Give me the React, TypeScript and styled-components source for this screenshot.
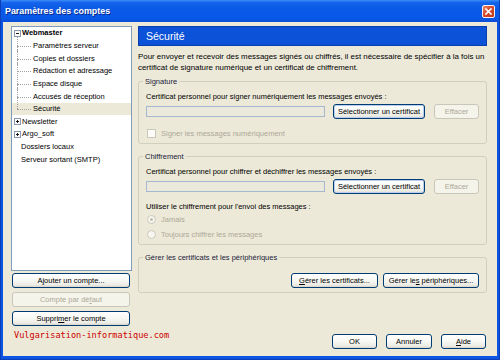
import React from 'react'
import styled, { createGlobalStyle } from 'styled-components'

const GlobalStyle = createGlobalStyle`
  html, body {
    margin: 0;
    padding: 0;
  }
  body {
    width: 500px;
    height: 360px;
    overflow: hidden;
    font-family: 'Liberation Sans', Arial, sans-serif;
    font-size: 7.5px;
    color: #000;
  }
`

type TreeItem = {
  label: string
  kind: 'root' | 'child' | 'leaf'
  sign?: 'plus' | 'minus'
  bold?: boolean
  selected?: boolean
  last?: boolean
}

const treeItems: TreeItem[] = [
  { label: 'Webmaster', kind: 'root', sign: 'minus', bold: true },
  { label: 'Paramètres serveur', kind: 'child' },
  { label: 'Copies et dossiers', kind: 'child' },
  { label: 'Rédaction et adressage', kind: 'child' },
  { label: 'Espace disque', kind: 'child' },
  { label: 'Accusés de réception', kind: 'child' },
  { label: 'Sécurité', kind: 'child', selected: true, last: true },
  { label: 'Newsletter', kind: 'root', sign: 'plus' },
  { label: 'Argo_soft', kind: 'root', sign: 'plus' },
  { label: 'Dossiers locaux', kind: 'leaf' },
  { label: 'Serveur sortant (SMTP)', kind: 'leaf' },
]

const ExpanderIcon: React.FC<{ sign: 'plus' | 'minus' }> = ({ sign }) => (
  <ExpanderSvg width='7' height='7' viewBox='0 0 7 7'>
    <rect x='0.5' y='0.5' width='6' height='6' fill='#fff' stroke='#8A97AC' />
    <line x1='2' y1='3.5' x2='5' y2='3.5' stroke='#1a1a1a' />
    {sign === 'plus' && <line x1='3.5' y1='2' x2='3.5' y2='5' stroke='#1a1a1a' />}
  </ExpanderSvg>
)

const CloseIcon = () => (
  <svg width='7' height='7' viewBox='0 0 7 7'>
    <path d='M1 1 L6 6 M6 1 L1 6' stroke='#fff' strokeWidth='1.6' strokeLinecap='square' />
  </svg>
)

const App: React.FC = () => {
  return (
    <>
      <GlobalStyle />
      <Window>
        <TitleBar>
          <Title>Paramètres des comptes</Title>
          <CloseButton>
            <CloseIcon />
          </CloseButton>
        </TitleBar>

        <Body>
          <Main>
            <LeftColumn>
              <TreeBox>
                {treeItems.map((item) => (
                  <TreeRow
                    key={item.label}
                    $kind={item.kind}
                    $selected={item.selected}
                    $last={item.last}
                  >
                    {item.sign && <ExpanderIcon sign={item.sign} />}
                    <TreeLabel $bold={item.bold}>{item.label}</TreeLabel>
                  </TreeRow>
                ))}
              </TreeBox>
              <SideButtons>
                <Button>
                  A<u>j</u>outer un compte...
                </Button>
                <Button disabled>
                  Compte par dé<u>f</u>aut
                </Button>
                <Button>
                  Suppri<u>m</u>er le compte
                </Button>
              </SideButtons>
              <Watermark>Vulgarisation-informatique.com</Watermark>
            </LeftColumn>

            <RightColumn>
              <PanelHeader>Sécurité</PanelHeader>
              <Intro>
                Pour envoyer et recevoir des messages signés ou chiffrés, il est
                nécessaire de spécifier à la fois un
                <br />
                certificat de signature numérique et un certificat de
                chiffrement.
              </Intro>

              <Group>
                <Caption>Signature</Caption>
                <Label>
                  Certificat personnel pour signer numériquement les messages
                  envoyés :
                </Label>
                <CertRow>
                  <CertField />
                  <Button $width={92} $focused>
                    Sélectionner un certificat
                  </Button>
                  <Button $width={45} disabled>
                    Effacer
                  </Button>
                </CertRow>
                <OptionRow $disabled $top={8}>
                  <CheckBox />
                  Signer les messages numériquement
                </OptionRow>
              </Group>

              <Group $gap>
                <Caption>Chiffrement</Caption>
                <Label>
                  Certificat personnel pour chiffrer et déchiffrer les messages
                  envoyés :
                </Label>
                <CertRow>
                  <CertField />
                  <Button $width={92} $focused>
                    Sélectionner un certificat
                  </Button>
                  <Button $width={45} disabled>
                    Effacer
                  </Button>
                </CertRow>
                <Label $top={6.5}>
                  Utiliser le chiffrement pour l'envoi des messages :
                </Label>
                <OptionRow $disabled $top={1.5}>
                  <Radio $checked />
                  Jamais
                </OptionRow>
                <OptionRow $disabled $top={2}>
                  <Radio />
                  Toujours chiffrer les messages
                </OptionRow>
              </Group>

              <Group $gap>
                <Caption>Gérer les certificats et les périphériques</Caption>
                <ManageRow>
                  <Button $width={87}>
                    <u>G</u>érer les certificats...
                  </Button>
                  <Button $width={96}>
                    Gérer le<u>s</u> périphériques...
                  </Button>
                </ManageRow>
              </Group>

              <DialogButtons>
                <Button $width={45}>OK</Button>
                <Button $width={46}>Annuler</Button>
                <Button $width={45}>
                  <u>A</u>ide
                </Button>
              </DialogButtons>
            </RightColumn>
          </Main>
        </Body>
      </Window>
    </>
  )
}

const Window = styled.div`
  width: 500px;
  height: 360px;
  display: flex;
  flex-direction: column;
  background: #0b55e2;
  box-sizing: border-box;
  border-left: 1px solid #0a3fb8;
  border-right: 1px solid #0a3fb8;
  border-bottom: 1px solid #0a3fb8;
`

const TitleBar = styled.div`
  height: 22px;
  flex-shrink: 0;
  display: flex;
  align-items: center;
  justify-content: space-between;
  padding: 0 4px 0 4px;
  background: linear-gradient(
    180deg,
    #3d8df8 0%,
    #1463ea 12%,
    #0a58e6 45%,
    #0858e8 80%,
    #0a4fd8 100%
  );
`

const Title = styled.span`
  color: #fff;
  font-weight: bold;
  font-size: 8.9px;
  text-shadow: 1px 1px 0 #0b2a8c;
`

const CloseButton = styled.div`
  width: 13px;
  height: 13px;
  box-sizing: border-box;
  display: flex;
  align-items: center;
  justify-content: center;
  border: 1px solid #f2f2f2;
  border-radius: 2px;
  background: linear-gradient(135deg, #f08a6e 0%, #d9482a 45%, #c23a1c 100%);
`

const Body = styled.div`
  flex: 1;
  display: flex;
  margin: 0 2px 3px 2px;
  padding: 4px 10px 7px 8px;
  background: #ece9d8;
`

const Main = styled.div`
  flex: 1;
  display: flex;
  gap: 6px;
`

const LeftColumn = styled.div`
  width: 121px;
  display: flex;
  flex-direction: column;
`

const TreeBox = styled.div`
  flex: 1;
  box-sizing: border-box;
  border: 1px solid #7f9db9;
  background: #fff;
  overflow: hidden;
`

const TreeRow = styled.div<{
  $kind: 'root' | 'child' | 'leaf'
  $selected?: boolean
  $last?: boolean
}>`
  position: relative;
  height: 12.65px;
  display: flex;
  align-items: center;
  white-space: nowrap;
  padding-left: ${(p) =>
    p.$kind === 'child' ? '21px' : p.$kind === 'leaf' ? '9px' : '2px'};
  background: ${(p) => (p.$selected ? '#ece9d8' : 'transparent')};

  ${(p) =>
    p.$kind === 'child' &&
    `
    &::before {
      content: '';
      position: absolute;
      left: 5px;
      top: 50%;
      width: 14px;
      border-top: 1px dotted #a0a0a0;
    }
    &::after {
      content: '';
      position: absolute;
      left: 5px;
      top: -3px;
      height: ${p.$last ? '9px' : 'calc(100% + 3px)'};
      border-left: 1px dotted #a0a0a0;
    }
  `}
`

const ExpanderSvg = styled.svg`
  flex-shrink: 0;
  margin-right: 1px;
`

const TreeLabel = styled.span<{ $bold?: boolean }>`
  font-weight: ${(p) => (p.$bold ? 'bold' : 'normal')};
  line-height: 12px;
`

const SideButtons = styled.div`
  display: flex;
  flex-direction: column;
  gap: 4px;
  margin: 2px 2px 0 1px;
`

const Watermark = styled.div`
  margin: 4px 0 8px 3px;
  height: 11px;
  line-height: 11px;
  font-family: 'DejaVu Sans Mono', 'Liberation Mono', monospace;
  font-size: 8.6px;
  color: #cc0000;
  white-space: nowrap;
`

const RightColumn = styled.div`
  flex: 1;
  display: flex;
  flex-direction: column;
`

const PanelHeader = styled.div`
  height: 20px;
  box-sizing: border-box;
  display: flex;
  align-items: center;
  padding-left: 7px;
  background: #0b52d8;
  border: 1px solid #0a3ea8;
  color: #fff;
  font-size: 10.5px;
`

const Intro = styled.p`
  margin: 5px 0 0 0;
  line-height: 11px;
  font-size: 7.9px;
  white-space: nowrap;
`

const Group = styled.fieldset<{ $gap?: boolean }>`
  margin: ${(p) => (p.$gap ? '6.5px' : '2.5px')} 0 0 0;
  padding: 4px 7px 3px 7px;
  min-width: 0;
  border: 1px solid #d0d0bf;
  border-radius: 3px;
`

const Caption = styled.legend`
  margin-left: -3px;
  padding: 0 2px;
  line-height: 11px;
  color: #1b1b3a;
`

const Label = styled.div<{ $top?: number }>`
  margin-top: ${(p) => p.$top ?? 0}px;
  line-height: 11px;
  white-space: nowrap;
`

const CertRow = styled.div`
  margin-top: 2.5px;
  height: 15px;
  display: flex;
  align-items: center;
  gap: 8px;

  & > button:last-child {
    margin-left: 1px;
  }
`

const CertField = styled.div`
  width: 179px;
  height: 11px;
  box-sizing: border-box;
  border: 1px solid #a5b8cf;
  background: #ebe9dc;
`

const OptionRow = styled.div<{ $disabled?: boolean; $top?: number }>`
  margin-top: ${(p) => p.$top ?? 0}px;
  height: 13px;
  display: flex;
  align-items: center;
  gap: 5px;
  padding-left: 1px;
  color: ${(p) => (p.$disabled ? '#aca899' : '#000')};
`

const CheckBox = styled.span`
  width: 9px;
  height: 9px;
  box-sizing: border-box;
  border: 1px solid #cac8bb;
  background: #fbfbf8;
`

const Radio = styled.span<{ $checked?: boolean }>`
  width: 9px;
  height: 9px;
  box-sizing: border-box;
  border: 1px solid #cac8bb;
  border-radius: 50%;
  background: #f7f6f0;
  display: flex;
  align-items: center;
  justify-content: center;

  &::after {
    content: '';
    width: 3px;
    height: 3px;
    border-radius: 50%;
    background: ${(p) => (p.$checked ? '#c0bdb0' : 'transparent')};
  }
`

const ManageRow = styled.div`
  margin-top: 6.5px;
  height: 15px;
  display: flex;
  justify-content: flex-end;
  gap: 5px;
  padding-bottom: 1px;
`

const DialogButtons = styled.div`
  margin-top: auto;
  display: flex;
  justify-content: flex-end;
  gap: 9px;
  padding-right: 1px;
`

const Button = styled.button<{ $width?: number; $focused?: boolean }>`
  ${(p) => (p.$width ? `width: ${p.$width}px;` : 'width: 100%;')}
  height: 15px;
  padding: 0;
  flex-shrink: 0;
  font-family: 'Liberation Sans', Arial, sans-serif;
  font-size: 7.5px;
  line-height: 13px;
  color: #000;
  border: 1px solid #003c74;
  border-radius: 3px;
  white-space: nowrap;
  background: linear-gradient(
    180deg,
    #ffffff 0%,
    #f6f6f2 55%,
    #ecebe5 85%,
    #d8d3c8 100%
  );
  box-shadow: ${(p) =>
    p.$focused ? 'inset 0 0 0 1px #b9cdee' : 'none'};

  &:disabled {
    color: #aca899;
    border-color: #c9c7ba;
    background: #f5f4ea;
  }

  u {
    text-decoration-thickness: 1px;
  }
`

export default App
